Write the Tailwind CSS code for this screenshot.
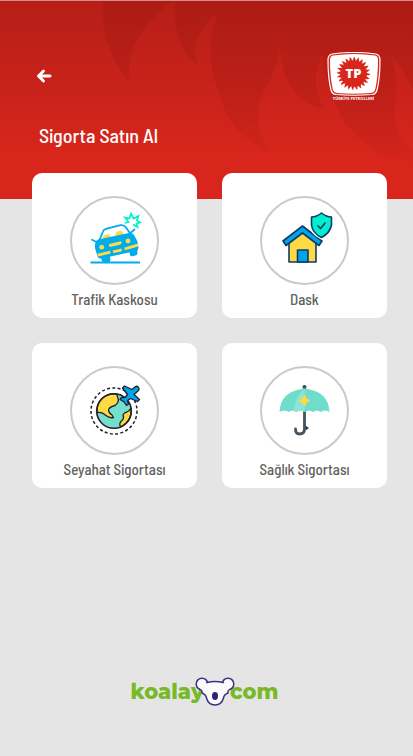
<!DOCTYPE html>
<html lang="tr">
<head>
<meta charset="utf-8">
<meta name="viewport" content="width=device-width, initial-scale=1">
<title>Sigorta Satın Al</title>
<script src="https://cdn.jsdelivr.net/npm/@tailwindcss/browser@4"></script>
</head>
<body class="min-h-screen flex flex-col bg-[#e5e5e5] font-['Barlow_Semi_Condensed','Liberation_Sans_Narrow','Liberation_Sans',sans-serif]">
<header class="relative border-t border-[#cf8f88] bg-linear-to-b from-[#b61f17] via-[#cb231b] to-[#d9261c] to-80% pl-8 pr-8 pt-[51px] pb-[50px] overflow-hidden">
  <svg class="absolute top-0 right-0 w-[413px] h-[199px]" viewBox="0 0 413 199" aria-hidden="true">
    <defs><linearGradient id="flame" x1="0" y1="0" x2="0" y2="160" gradientUnits="userSpaceOnUse"><stop offset="0" stop-color="#a81a12" stop-opacity=".65"/><stop offset=".5" stop-color="#ab1b13" stop-opacity=".4"/><stop offset="1" stop-color="#b01c14" stop-opacity=".16"/></linearGradient></defs>
    <path fill="url(#flame)" d="M103 0C102 36 109 52 129 82C127 44 138 32 172 0H175C174 34 180 48 198 65C190 40 200 28 217 12C208 48 209 66 220 96C230 127 247 141 269 151C248 113 262 93 271 77C277 64 279 54 279 42C284 75 286 97 325 109C314 90 313 74 322 53C325 76 332 102 345 121C361 145 385 159 413 160V151C393 132 394 115 396 94C397 79 396 68 391 56Q399 61 413 88V0Z"/>
  </svg>
  <div class="relative flex items-center justify-between h-12">
    <a href="#" aria-label="Geri" class="block pl-1">
      <svg class="w-4 h-4" viewBox="0 0 16 16" fill="none" stroke="#fff" stroke-width="3" stroke-linecap="round" stroke-linejoin="round"><path d="M7.500 3L2.500 8L7.500 13M3 8H14"/></svg>
    </a>
    <svg class="w-[54px] h-12" viewBox="0 0 54 48" role="img" aria-label="Türkiye Petrolleri">
      <path d="M5 2Q27-1 49 2Q53 3 53 8Q53 26 50 38Q49 42 45 42.500Q27 44 9 42.500Q5 42 4 38Q1 26 1 8Q1 3 5 2Z" fill="#d9261c" stroke="#fff" stroke-width="1.200"/>
      <path d="M6 3.500Q27 .5 48 3.500Q51 4 51 8Q51 25 48.300 37Q47.500 40.500 44 41Q27 42.500 10 41Q6.500 40.500 5.700 37Q3 25 3 8Q3 4 6 3.500Z" fill="#fff"/>
      <g fill="#d9261c" transform="translate(26.500 21.500)" id="sun"><circle r="13"/></g>
      <text x="26.500" y="26" text-anchor="middle" fill="#fff" font-family="Open Sans, sans-serif" font-weight="800" font-size="13">TP</text>
      <text x="26.500" y="48" text-anchor="middle" fill="#fff" font-family="Open Sans, sans-serif" font-weight="700" font-size="4">TÜRKİYE PETROLLERİ</text>
    </svg>
  </div>
  <h1 class="relative mt-[21px] pl-[7px] text-[20px] leading-7 font-medium text-white">Sigorta Satın Al</h1>
</header>

<main class="relative -mt-[26px] grid grid-cols-2 gap-[25px] pl-8 pr-[26px]">
  <a href="#" class="flex flex-col items-center rounded-[10px] bg-white pt-[23px] pb-[9px]">
    <span class="flex size-[89px] items-center justify-center rounded-full border-2 border-[#cacaca]">
      <svg class="size-16" viewBox="0 0 64 64" aria-hidden="true" stroke-linejoin="round">
        <path d="M7.500 53.500H57" stroke="#00acec" stroke-width="1.800"/>
        <path d="M18 47L26.500 45.500L27.500 51Q27.500 53 25 53H21Q19 53 18.500 51ZM46 41.500L54 38L54.500 44Q54.500 46 52.500 46.500L49 47.300Q47.500 47.500 47 46Z" fill="#00acec"/>
        <path d="M16.500 31L20 22.500Q20.500 20.500 23 19.800L37.500 16.200Q41 15.500 43 18.500L47.500 25" fill="none" stroke="#00acec" stroke-width="1.800"/>
        <path d="M20.500 31L20 28Q20 26.500 22 26L25 25.400Q27 25 27.500 27L28 29.500ZM32.500 28.500L32.300 25Q32.500 23 34.500 22.400L37.500 21.800Q39.500 21.500 40 23.500L41 26.500Z" fill="#ffda44"/>
        <path d="M15 30.500L46 24Q49.500 23.500 51 26L54.500 32.500L55.500 38.500Q55.500 41 53 42L18 49.500Q15.500 50 14.500 47.500L12 39Q11.500 32 15 30.500Z" fill="#00acec"/>
        <path d="M12.500 32.500L9 30.800M48 23.500L51.500 20.500" stroke="#00acec" stroke-width="1.800" stroke-linecap="round"/>
        <path d="M26 35L38 32.200Q39 32.500 38.500 34.500L37 35.800L27 38Q25.500 37.500 26 35Z" fill="#ffda44"/>
        <circle cx="18.700" cy="38.200" r="2.400" fill="#ffda44"/><circle cx="45" cy="32" r="2.400" fill="#ffda44"/>
        <path d="M14.300 44.700L27 41.800L27.800 44.500L15 47.500ZM29.500 41.500L38.500 39.400L39 42.200L30.500 44.200ZM41 38.700L54.800 34.500L55.300 37.500L42 41.300Z" fill="#ffda44"/>
        <path d="M41.500 14L45.500 13L42 8.500L46.500 9.500L48 4.500L50.500 9.500L55.500 7L54 11.500L57 13.500L53.500 14.500L54.500 18L50 15.500" fill="none" stroke="#00f0c8" stroke-width="1.700" stroke-linejoin="miter"/>
      </svg>
    </span>
    <span class="mt-1 text-[15px] leading-5 font-medium text-[#626262]">Trafik Kaskosu</span>
  </a>
  <a href="#" class="flex flex-col items-center rounded-[10px] bg-white pt-[23px] pb-[9px]">
    <span class="flex size-[89px] items-center justify-center rounded-full border-2 border-[#cacaca]">
      <svg class="size-16" viewBox="0 0 64 64" aria-hidden="true" stroke="#113a68" stroke-width="1.600" stroke-linejoin="round">
        <path d="M16 34L29.500 23L43 34V53H16Z" fill="#ffda44"/>
        <path d="M29.500 17L10 32L13 36.500L29.500 24L46 36.500L49 32Z" fill="#00a5e8"/>
        <path d="M24.500 41H35V53H24.500Z" fill="#00a5e8"/>
        <path d="M48.500 3Q54 7 59 7V16Q58 24 48.500 28.500Q39 24 38.500 16V7Q44 7 48.500 3Z" fill="#fff" stroke="#fff" stroke-width="4"/>
        <path d="M48.500 4Q53.500 8 58.500 8V16Q57 24 48.500 28.500Q39.500 24 38.500 16V8Q43.500 8 48.500 4Z" fill="#00efd1"/>
        <path d="M44.500 16.500l3 3 5-6" fill="none"/>
      </svg>
    </span>
    <span class="mt-1 text-[15px] leading-5 font-medium text-[#626262]">Dask</span>
  </a>
  <a href="#" class="flex flex-col items-center rounded-[10px] bg-white pt-[23px] pb-[9px]">
    <span class="flex size-[89px] items-center justify-center rounded-full border-2 border-[#cacaca]">
      <svg class="size-16" viewBox="0 0 64 64" aria-hidden="true" stroke-linejoin="round">
        <circle cx="31" cy="32" r="23" fill="none" stroke="#20202a" stroke-width="1.500" stroke-dasharray="3 2.300"/>
        <circle cx="31" cy="32" r="17.300" fill="#74dfcd"/>
        <path d="M13.800 33.500Q14 22 22 17.300Q28 14 33.500 15L35 19Q36.500 23 32 26.500Q26 28 25.500 31Q25.500 34 29 36L30.500 38.500Q27 39.500 23 36.500Q19 32.500 13.800 33.500Z" fill="#ffda44" stroke="#252028" stroke-width="1.300"/>
        <path d="M48 29Q49.500 42 37.500 47.800Q35.500 44 39 41.500Q41.500 39 40 36Q41 33.500 44 33Q46.500 32 48 29Z" fill="#ffda44" stroke="#252028" stroke-width="1.300"/>
        <circle cx="31" cy="32" r="17.300" fill="none" stroke="#252028" stroke-width="1.600"/>
        <path d="M55 8Q57 10 55 12L51 15.500L56.500 20.500L54.500 22.500L47.500 19.500L44.500 21.500L45.500 25L43.500 26.500L41 22.800L37 20.500L38.500 18.500L42 18.500L44.500 15.500L39.500 9L41.500 7L49 10.500L52 8Q54 6.500 55 8Z" fill="#00a5ee" stroke="#20202a" stroke-width="1.300"/>
      </svg>
    </span>
    <span class="mt-1 text-[15px] leading-5 font-medium text-[#626262]">Seyahat Sigortası</span>
  </a>
  <a href="#" class="flex flex-col items-center rounded-[10px] bg-white pt-[23px] pb-[9px]">
    <span class="flex size-[89px] items-center justify-center rounded-full border-2 border-[#cacaca]">
      <svg class="size-16" viewBox="0 0 64 64" aria-hidden="true">
        <circle cx="31.500" cy="8" r="2" fill="#3c4650"/>
        <path d="M31.500 8V50Q31.500 55 26.500 55Q22.500 55 22.500 50" fill="none" stroke="#46525c" stroke-width="2.800" stroke-linecap="round"/>
        <path d="M32.500 46.500l3.500 2.500-3.500 2.500z" fill="#303a44"/>
        <path d="M6.500 33Q7.500 12 31.500 9.500Q55.500 12 56.500 33Q52 30 47.500 33Q44 30 40 33Q36 30 31.500 33Q28 30 23 33Q20 30 15.500 33Q12 30 6.500 33Z" fill="#70ddcb"/>
        <path d="M31.500 9.500Q22 18 20.500 32L23 33Q28 30 31.500 33Z" fill="#8ae5d6"/>
        <path d="M31.500 17L33 20L36 21.500L33 23L31.500 26L30 23L27 21.500L30 20Z" fill="#ffda44" stroke="#ffda44" stroke-width="1.800" stroke-linejoin="round"/>
      </svg>
    </span>
    <span class="mt-1 text-[15px] leading-5 font-medium text-[#626262]">Sağlık Sigortası</span>
  </a>
</main>

<footer class="mt-auto flex justify-center pb-12 pr-1">
  <a href="#" class="flex h-8 items-center font-['Montserrat','Open_Sans',sans-serif] text-[21px] leading-8 font-extrabold text-[#78b929]">
    <span>koalay</span>
    <svg class="relative -ml-[9px] -mr-[5px] h-8 w-10 shrink-0" viewBox="0 0 40 32" aria-hidden="true">
      <g fill="#fbfbfd" stroke="#38317f" stroke-width="1.500">
        <circle cx="7" cy="8" r="5.800"/><circle cx="33" cy="8" r="5.800"/>
        <path d="M12 6.500Q20 4.500 28 6.500Q34 11 33 17Q29 18.500 28.500 22Q26.500 29 20 29Q13.500 29 11.500 22Q11 18.500 7 17Q6 11 12 6.500Z"/>
      </g>
      <path d="M7 5Q10 6 12.500 8L13 15L8 15L5 12ZM33 5Q30 6 27.500 8L27 15L32 15L35 12Z" fill="#fbfbfd"/>
      <ellipse cx="20" cy="20" rx="3" ry="4" fill="#2b2379"/>
    </svg>
    <span>com</span>
  </a>
</footer>
<script>
  // Curved rays around the emblem's disc
  const sun = document.getElementById('sun');
  for (let i = 0; i < 24; i++) {
    const ray = document.createElementNS('http://www.w3.org/2000/svg', 'path');
    ray.setAttribute('d', 'M-2-12Q0-13.500 .5-17Q2.500-15 2-12Z');
    ray.setAttribute('transform', `rotate(${i * 15})`);
    sun.append(ray);
  }
</script>
</body>
</html>
